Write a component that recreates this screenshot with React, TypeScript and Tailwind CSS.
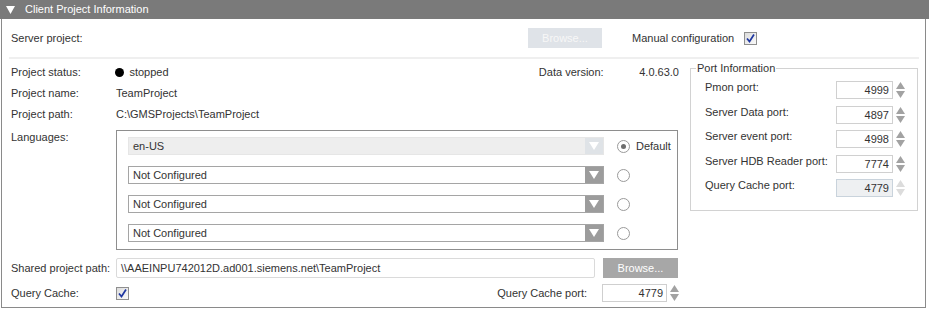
const Check = () => (
  <span className="w-[13px] h-[13px] border border-[#8f8f8f] bg-gradient-to-br from-[#dcdcdc] to-[#fafafa] flex items-center justify-center">
    <svg width="11" height="11" viewBox="0 0 11 11">
      <path d="M2 5.5 L4.5 8.5 L9 1.5" stroke="#1e36a0" strokeWidth="1.7" fill="none" />
    </svg>
  </span>
);

const Spinner = ({ disabled }: { disabled?: boolean }) => (
  <svg width="9" height="18" viewBox="0 0 9 18" className="ml-[3px]">
    <path d="M4.5 1 L9 8 L0 8 Z" fill={disabled ? '#dcdcdc' : '#a2a2a2'} />
    <path d="M0 10 L9 10 L4.5 17 Z" fill={disabled ? '#dcdcdc' : '#a2a2a2'} />
  </svg>
);

const Radio = ({ on }: { on?: boolean }) => (
  <span className="w-[13px] h-[13px] rounded-full border border-[#9a9a9a] bg-white flex items-center justify-center">
    {on && <span className="w-[5px] h-[5px] rounded-full bg-[#6e6e6e]" />}
  </span>
);

const Dropdown = ({ value, disabled }: { value: string; disabled?: boolean }) => (
  <div
    className={
      disabled
        ? 'w-[476px] h-[18px] flex border border-[#e6e6e6] bg-[#eeeeee]'
        : 'w-[476px] h-[18px] flex border border-[#a5a5a5] bg-white'
    }>
    <span className="flex-1 pl-[4px] leading-[16px]">{value}</span>
    <span
      className={
        disabled
          ? 'w-[18px] h-full bg-[#dfe3e7] flex items-center justify-center'
          : 'w-[18px] h-full bg-[#9c9c9c] flex items-center justify-center'
      }>
      <svg width="10" height="8" viewBox="0 0 10 8">
        <path d="M0 0 L10 0 L5 8 Z" fill="#fff" />
      </svg>
    </span>
  </div>
);

const ports = [
  { label: 'Pmon port:', value: '4999' },
  { label: 'Server Data port:', value: '4897' },
  { label: 'Server event port:', value: '4998' },
  { label: 'Server HDB Reader port:', value: '7774' },
  { label: 'Query Cache port:', value: '4779', disabled: true },
];

export default function App() {
  return (
    <div className="w-[929px] h-[310px] bg-white font-['Liberation_Sans',Arial,sans-serif] text-[11px] text-[#333]">
      <div className="h-[19px] bg-[#7a7a7a] flex items-center text-white text-[11px]">
        <svg width="9" height="8" viewBox="0 0 9 8" className="ml-[6px]">
          <path d="M0 0 L9 0 L4.5 8 Z" fill="#fff" />
        </svg>
        <span className="ml-[10px]">Client Project Information</span>
      </div>

      <div className="ml-[1px] w-[925px] h-[289px] border-x border-b border-[#8a8a8a]">
        <div className="h-[38px] flex items-center pl-[9px]">
          <span className="w-[517px]">Server project:</span>
          <span className="w-[74px] h-[20px] bg-[#dfe3e8] text-[#f7f7f7] flex items-center justify-center">Browse...</span>
          <span className="ml-[30px]">Manual configuration</span>
          <span className="ml-[10px]">
            <Check />
          </span>
        </div>
        <div className="ml-[7px] w-[910px] h-[2px] bg-[#efefef]" />

        <div className="flex pl-[9px] pt-[3px]">
          <div className="w-[668px] flex flex-col">
            <div className="h-[21px] flex items-center">
              <span className="w-[105px]">Project status:</span>
              <span className="w-[426px] flex items-center">
                <span className="w-[9px] h-[9px] rounded-full bg-black" />
                <span className="ml-[5px]">stopped</span>
              </span>
              <span className="w-[101px]">Data version:</span>
              <span>4.0.63.0</span>
            </div>
            <div className="h-[21px] flex items-center">
              <span className="w-[105px]">Project name:</span>
              <span>TeamProject</span>
            </div>
            <div className="h-[21px] flex items-center">
              <span className="w-[105px]">Project path:</span>
              <span>C:\GMSProjects\TeamProject</span>
            </div>
            <div className="flex items-start">
              <span className="w-[105px] pt-[4px]">Languages:</span>
              <div className="mt-[5px] w-[562px] h-[120px] border border-[#8e8e8e] pl-[11px] pt-[6px] flex flex-col gap-[11px]">
                {[
                  { v: 'en-US', d: true },
                  { v: 'Not Configured' },
                  { v: 'Not Configured' },
                  { v: 'Not Configured' },
                ].map((r, i) => (
                  <div key={i} className="flex items-center">
                    <Dropdown value={r.v} disabled={r.d} />
                    <span className="ml-[13px]">
                      <Radio on={i === 0} />
                    </span>
                    {i === 0 && <span className="ml-[6px]">Default</span>}
                  </div>
                ))}
              </div>
            </div>
            <div className="mt-[8px] h-[20px] flex items-center">
              <span className="w-[105px]">Shared project path:</span>
              <span className="w-[479px] h-[20px] border border-[#dadada] rounded-[2px] pl-[4px] flex items-center">
                \\AAEINPU742012D.ad001.siemens.net\TeamProject
              </span>
              <span className="ml-[8px] w-[75px] h-[20px] bg-[#a7a7a7] text-white flex items-center justify-center">Browse...</span>
            </div>
            <div className="mt-[6px] h-[18px] flex items-center">
              <span className="w-[105px]">Query Cache:</span>
              <Check />
              <span className="w-[459px] text-right">Query Cache port:</span>
              <span className="ml-[15px] w-[65px] h-[18px] border border-[#cfcfcf] text-right pr-[3px] leading-[16px]">4779</span>
              <Spinner />
            </div>
          </div>

          <fieldset className="ml-[11px] w-[228px] h-[149px] border border-[#d2d2d2] px-0 pb-[10px]">
            <legend className="ml-[5px] px-[1px] leading-[13px]">Port Information</legend>
            <div className="flex flex-col gap-[6.5px] pl-[14px] pt-[6px]">
              {ports.map((p) => (
                <div key={p.label} className="flex items-start h-[18px]">
                  <span className="w-[131px] leading-[13px]">{p.label}</span>
                  <span
                    className={
                      p.disabled
                        ? 'w-[57px] h-[18px] border border-[#c9d3dc] bg-[#eef0f2] text-right pr-[3px] leading-[16px]'
                        : 'w-[57px] h-[18px] border border-[#d0d0d0] bg-white text-right pr-[3px] leading-[16px]'
                    }>
                    {p.value}
                  </span>
                  <Spinner disabled={p.disabled} />
                </div>
              ))}
            </div>
          </fieldset>
        </div>
      </div>
    </div>
  );
}
